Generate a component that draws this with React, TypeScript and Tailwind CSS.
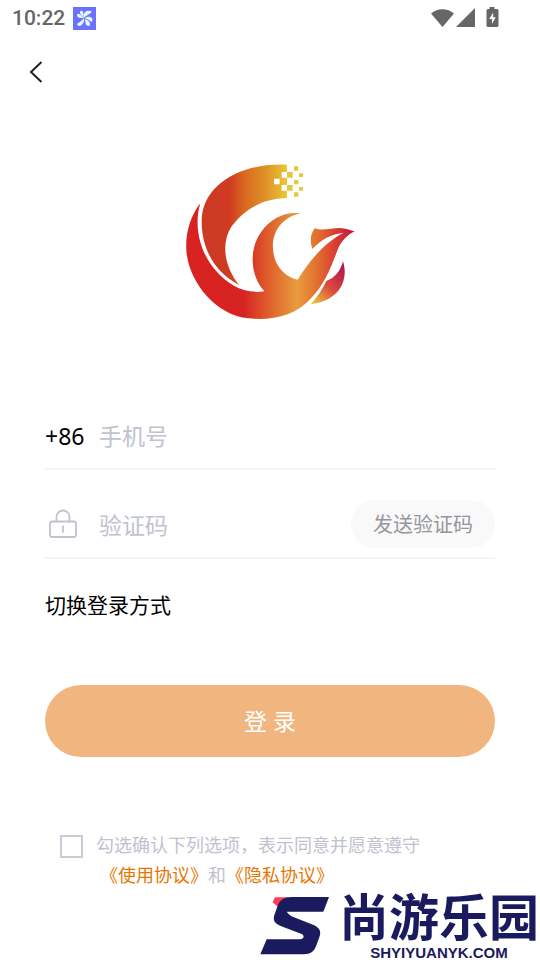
import { useState } from "react";

function PinwheelIcon() {
  return (
    <svg viewBox="0 0 69 69" className="size-[23px]" aria-hidden="true">
      <rect width="69" height="69" fill="#6b72fb" />
      <g fill="#e6f6ff">
        <path d="M33 32C30 25 33 15 41 12C47 10 54 11 56 14C54 20 41 24 33 32Z" />
        <path d="M36 33C43 28 52 28 57 34C59 38 58 43 56 45C50 42 44 36 36 33Z" />
        <path d="M35 35C43 38 52 44 51 53C50 58 45 57 41 55C36 51 38 42 35 35Z" />
        <path d="M33 34C35 43 30 53 23 56C17 58 13 55 12 51C19 47 26 41 33 34Z" />
        <path d="M32 32C24 35 14 32 12 26C11 22 14 20 17 20C23 22 26 28 32 32Z" />
        <path d="M33 32C27 28 20 20 21 14C23 10 28 11 30 15C32 20 31 26 33 32Z" />
      </g>
    </svg>
  );
}

function StatusBar() {
  return (
    <div className="flex h-9 items-center justify-between pr-[41px] pl-3 text-[#666]">
      <div className="flex items-center gap-2">
        <span className="font-['Roboto',sans-serif] text-[21px] leading-6 font-medium">10:22</span>
        <PinwheelIcon />
      </div>
      <svg viewBox="0 0 68 22" className="h-[22px] w-[68px]" fill="currentColor" aria-hidden="true">
        <path d="M0 6.500C6.500.7 16.500.7 23 6.500L11.500 20Z" />
        <path d="M44 1v19H25Z" />
        <path
          fillRule="evenodd"
          d="M58.500 0h5v2H66q1.500 0 1.500 1.500v15Q67.500 20 66 20H57q-1.500 0-1.500-1.500v-15Q55.500 2 57 2h1.500ZM62.200 5.500l-4 6.500h2.800v4.700l3.800-6.500h-2.600Z"
        />
      </svg>
    </div>
  );
}

function PhoenixLogo() {
  return (
    <svg viewBox="0 0 600 540" className="h-[180px] w-[200px]" role="img" aria-label="Logo">
      <defs>
        <linearGradient id="wing" gradientUnits="userSpaceOnUse" x1="95" y1="0" x2="400" y2="0">
          <stop offset="0" stopColor="#cb3a24" />
          <stop offset="0.27" stopColor="#cf3a22" />
          <stop offset="0.42" stopColor="#d9681f" />
          <stop offset="0.65" stopColor="#e0962a" />
          <stop offset="0.84" stopColor="#e9c934" />
          <stop offset="1" stopColor="#e3c94c" />
        </linearGradient>
        <linearGradient id="body" gradientUnits="userSpaceOnUse" x1="50" y1="0" x2="552" y2="0">
          <stop offset="0" stopColor="#d92222" />
          <stop offset="0.34" stopColor="#d82323" />
          <stop offset="0.48" stopColor="#de5b2b" />
          <stop offset="0.66" stopColor="#e99c3e" />
          <stop offset="0.77" stopColor="#e2742e" />
          <stop offset="0.88" stopColor="#da4232" />
          <stop offset="1" stopColor="#c4133e" />
        </linearGradient>
        <linearGradient id="tail" gradientUnits="userSpaceOnUse" x1="428" y1="460" x2="525" y2="360">
          <stop offset="0" stopColor="#e9c83c" />
          <stop offset="0.5" stopColor="#d94c3c" />
          <stop offset="1" stopColor="#b8154e" />
        </linearGradient>
      </defs>
      <path
        fill="url(#wing)"
        d="M351 44V144C273 145 219 183 185 229C153 277 161 347 207 405C130 365 94 290 95 211C97 97 226 36 351 44Z"
      />
      <g fill="#fff">
        <path d="M335 66h16v17h-16zM312 86h17v17h-17zM335 105h16v17h-16z" />
      </g>
      <g fill="#e4c83f">
        <path d="M351 66h17v17h-17zM351 105h17v17h-17zM372 49h13v13h-13zM372 90h13v13h-13zM372 127h13v13h-13zM387 70h12v11h-12zM387 111h12v11h-12z" />
      </g>
      <path
        fill="url(#body)"
        d="M91 160C70 229 91 307 134 358C178 411 229 432 283 424C236 371 239 292 275 244C302 207 342 184 391 190C330 204 302 254 310 306C315 349 345 381 383 389C418 333 465 276 521 248C485 252 453 268 427 297C419 272 421 254 434 235C462 246 496 229 525 236C537 238 544 242 554 244C532 255 515 272 505 294C475 374 459 407 421 447C377 497 304 513 235 505C137 496 55 395 49 300C46 245 63 196 91 160Z"
      />
      <path fill="url(#tail)" d="M519 334C535 384 516 451 422 463C444 438 459 415 469 393C495 384 512 362 519 334Z" />
    </svg>
  );
}

function LockIcon() {
  return (
    <svg
      viewBox="0 0 30 30"
      className="size-[30px]"
      fill="none"
      stroke="#c0c2cf"
      strokeWidth="1.8"
      strokeLinecap="round"
      aria-hidden="true"
    >
      <rect x="2" y="12.500" width="26" height="15.500" rx="2" />
      <path d="M8.500 12.500V8a6.500 6.500 0 0 1 13 0v4.500M15 17.500V23" />
    </svg>
  );
}

function Watermark() {
  return (
    <div className="flex items-start self-end pr-px text-[#1a1a5e]">
      <svg viewBox="-6 0 216 186" className="mt-[3px] h-[62px] w-[72px]" aria-hidden="true">
        <path fill="#ff3d55" d="M39 13H80L48 42 32 28Z" />
        <path
          fill="currentColor"
          d="M88 12H201L184 56H74C80 64 86 69 94 72L153 95C172 103 178 114 173 130L162 160C156 176 146 184 125 184H-5L14 139H115C125 138 129 128 119 123L58 100C39 92 32 84 37 67L47 38C54 20 69 12 88 12Z"
        />
      </svg>
      <div className="flex flex-col items-center pl-[7px]">
        <span className="text-[50px] leading-[55px] font-bold">尚游乐园</span>
        <span className="font-['Liberation_Sans',sans-serif] text-[15px] leading-[15px] font-bold">SHYIYUANYK.COM</span>
      </div>
    </div>
  );
}

export default function App() {
  const [phone, setPhone] = useState("");
  const [code, setCode] = useState("");
  const [agreed, setAgreed] = useState(false);

  return (
    <div className="flex min-h-screen flex-col bg-white font-['Noto_Sans','Noto_Sans_CJK_SC',sans-serif] text-black">
      <StatusBar />
      <header className="flex h-[72px] items-center px-6">
        <button type="button" aria-label="返回" className="flex size-6 items-center justify-center">
          <svg viewBox="0 0 24 24" className="size-6" fill="none" stroke="#222" strokeWidth="2" aria-hidden="true">
            <path d="M17.500 2 7 12l10.500 10" />
          </svg>
        </button>
      </header>

      <main className="flex flex-col px-[45px] pt-[42px]">
        <div className="flex justify-center">
          <PhoenixLogo />
        </div>

        <form className="mt-[51px] flex flex-col" onSubmit={(e) => e.preventDefault()}>
          <div className="flex border-b-2 border-[#f4f4f9] pt-[30px] pb-[9px]">
            <label htmlFor="phone" className="flex h-12 w-[54px] shrink-0 items-center pt-0.5 text-[23px]">
              +86
            </label>
            <input
              id="phone"
              type="tel"
              value={phone}
              onChange={(e) => setPhone(e.target.value)}
              placeholder="手机号"
              className="h-12 min-w-0 flex-1 pt-0.5 text-[23px] outline-none placeholder:text-[#c0c2cf]"
            />
          </div>
          <div className="flex border-b-2 border-[#f4f4f9] pt-[30px] pb-[9px]">
            <label htmlFor="code" aria-label="验证码" className="flex h-12 w-[54px] shrink-0 items-center pl-[3px]">
              <LockIcon />
            </label>
            <input
              id="code"
              type="text"
              value={code}
              onChange={(e) => setCode(e.target.value)}
              placeholder="验证码"
              className="h-12 min-w-0 flex-1 pt-0.5 text-[23px] outline-none placeholder:text-[#c0c2cf]"
            />
            <button type="button" className="h-12 shrink-0 rounded-full bg-[#f9f9f9] px-[22px] pt-0.5 text-xl text-[#94959d]">
              发送验证码
            </button>
          </div>

          <button type="button" className="mt-[31px] self-start text-[21px] leading-[30px]">
            切换登录方式
          </button>

          <button type="submit" className="mt-[65px] h-[72px] rounded-full bg-[#f1b580] text-[23px] text-white">
            登 录
          </button>

          <div className="mt-[73px] flex gap-[13px] pl-[15px] text-lg leading-[30px] text-[#c0c2cf]">
            <input
              id="agree"
              type="checkbox"
              checked={agreed}
              onChange={(e) => setAgreed(e.target.checked)}
              className="mt-[5px] size-[23px] shrink-0 appearance-none border-2 border-[#c9cbd6] checked:bg-[#f1b580]"
            />
            <div>
              <label htmlFor="agree" className="block">
                勾选确认下列选项，表示同意并愿意遵守
              </label>
              <p className="pl-1">
                <a href="#terms" className="text-[#e87500]">《使用协议》</a>和
                <a href="#privacy" className="text-[#e87500]">《隐私协议》</a>
              </p>
            </div>
          </div>
        </form>
      </main>

      <Watermark />
    </div>
  );
}
